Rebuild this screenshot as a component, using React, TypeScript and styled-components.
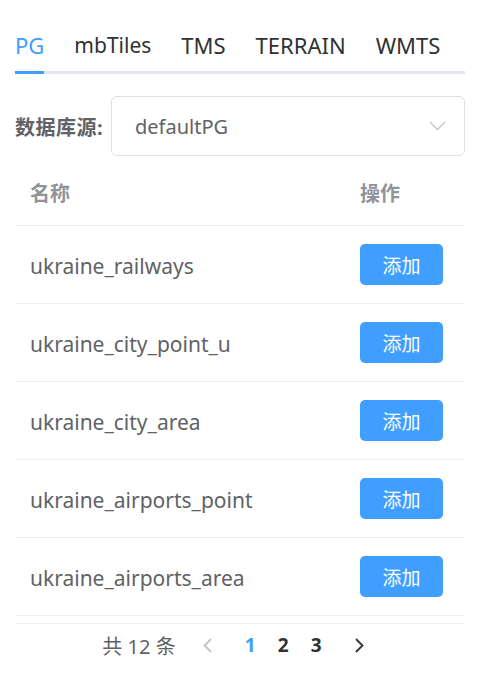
import React from "react";
import styled, { createGlobalStyle } from "styled-components";

const Global = createGlobalStyle`
  html, body { margin: 0; padding: 0; background: #fff; }
  body { font-family: "Noto Sans", "Noto Sans CJK SC", sans-serif; }
`;

const Page = styled.div`
  width: 450px;
  padding: 17px 13px 0 15px;
`;

const TabNav = styled.div`
  display: flex;
  height: 54px;
  border-bottom: 3px solid #e4e7ed;
  gap: 30px;
`;

const Tab = styled.div<{ $active?: boolean; $caps?: boolean }>`
  position: relative;
  font-size: ${(p) => (p.$caps ? 22 : 21)}px;
  line-height: 56px;
  color: ${(p) => (p.$active ? "#409eff" : "#303133")};
  &::after {
    content: "";
    display: ${(p) => (p.$active ? "block" : "none")};
    position: absolute;
    left: 0;
    right: 0;
    bottom: -3px;
    height: 3px;
    background: #409eff;
  }
`;

const FormRow = styled.div`
  display: flex;
  align-items: center;
  margin-top: 22px;
`;

const Label = styled.div`
  font-size: 20px;
  font-weight: bold;
  color: #606266;
  width: 96px;
  letter-spacing: 0.5px;
`;

const Select = styled.div`
  flex: 1;
  height: 58px;
  border: 1px solid #dcdfe6;
  border-radius: 6px;
  display: flex;
  align-items: center;
  justify-content: space-between;
  padding: 0 18px 0 23px;
  font-size: 20px;
  color: #606266;
`;

const Table = styled.div`
  margin-top: 4px;
`;

const Row = styled.div<{ $head?: boolean }>`
  display: grid;
  grid-template-columns: 1fr 120px;
  height: ${(p) => (p.$head ? 65 : 77)}px;
  align-items: center;
  border-bottom: 1px solid #ebeef5;
`;

const Cell = styled.div<{ $head?: boolean }>`
  padding-left: 15px;
  padding-top: ${(p) => (p.$head ? 0 : 2)}px;
  font-size: ${(p) => (p.$head ? 20 : 21)}px;
  color: ${(p) => (p.$head ? "#909399" : "#606266")};
  font-weight: ${(p) => (p.$head ? "bold" : "normal")};
`;

const AddButton = styled.button`
  width: 83px;
  height: 41px;
  border: none;
  border-radius: 5px;
  background: #409eff;
  color: #fff;
  font-family: inherit;
  font-size: 19px;
  padding: 0;
  margin-top: -2px;
`;

const TableBottom = styled.div`
  margin-top: 7px;
  border-top: 1px solid #ebeef5;
`;

const Pager = styled.div`
  display: flex;
  justify-content: center;
  align-items: center;
  height: 42px;
  padding-right: 2px;
`;

const Total = styled.span`
  font-size: 20px;
  color: #606266;
  margin-right: 15px;
`;

const PagerBtn = styled.div<{ $side?: "l" | "r" }>`
  width: 33px;
  display: flex;
  justify-content: center;
  align-items: center;
  margin-left: ${(p) => (p.$side === "r" ? "10px" : "0")};
  margin-right: ${(p) => (p.$side === "l" ? "10px" : "0")};
`;

const PageNum = styled.div<{ $active?: boolean }>`
  width: 33px;
  text-align: center;
  font-size: 19px;
  font-weight: bold;
  color: ${(p) => (p.$active ? "#409eff" : "#303133")};
`;

const tabs = ["PG", "mbTiles", "TMS", "TERRAIN", "WMTS"];
const rows = [
  "ukraine_railways",
  "ukraine_city_point_u",
  "ukraine_city_area",
  "ukraine_airports_point",
  "ukraine_airports_area",
];

const Chevron = ({ dir, color }: { dir: "l" | "r" | "d"; color: string }) => {
  if (dir === "d")
    return (
      <svg width="17" height="10" viewBox="0 0 17 10">
        <polyline points="1,1 8.5,8.5 16,1" fill="none" stroke={color} strokeWidth="1.4" />
      </svg>
    );
  return (
    <svg width="9" height="15" viewBox="0 0 9 15">
      <polyline
        points={dir === "l" ? "8,1 1.5,7.5 8,14" : "1,1 7.5,7.5 1,14"}
        fill="none"
        stroke={color}
        strokeWidth="1.8"
      />
    </svg>
  );
};

export default function App() {
  return (
    <Page>
      <Global />
      <TabNav>
        {tabs.map((t, i) => (
          <Tab key={t} $active={i === 0} $caps={t === t.toUpperCase()}>
            {t}
          </Tab>
        ))}
      </TabNav>
      <FormRow>
        <Label>数据库源:</Label>
        <Select>
          <span>defaultPG</span>
          <Chevron dir="d" color="#c0c4cc" />
        </Select>
      </FormRow>
      <Table>
        <Row $head>
          <Cell $head>名称</Cell>
          <Cell $head>操作</Cell>
        </Row>
        {rows.map((r) => (
          <Row key={r}>
            <Cell>{r}</Cell>
            <Cell>
              <AddButton>添加</AddButton>
            </Cell>
          </Row>
        ))}
        <TableBottom />
      </Table>
      <Pager>
        <Total>共 12 条</Total>
        <PagerBtn $side="l">
          <Chevron dir="l" color="#c0c4cc" />
        </PagerBtn>
        <PageNum $active>1</PageNum>
        <PageNum>2</PageNum>
        <PageNum>3</PageNum>
        <PagerBtn $side="r">
          <Chevron dir="r" color="#303133" />
        </PagerBtn>
      </Pager>
    </Page>
  );
}
